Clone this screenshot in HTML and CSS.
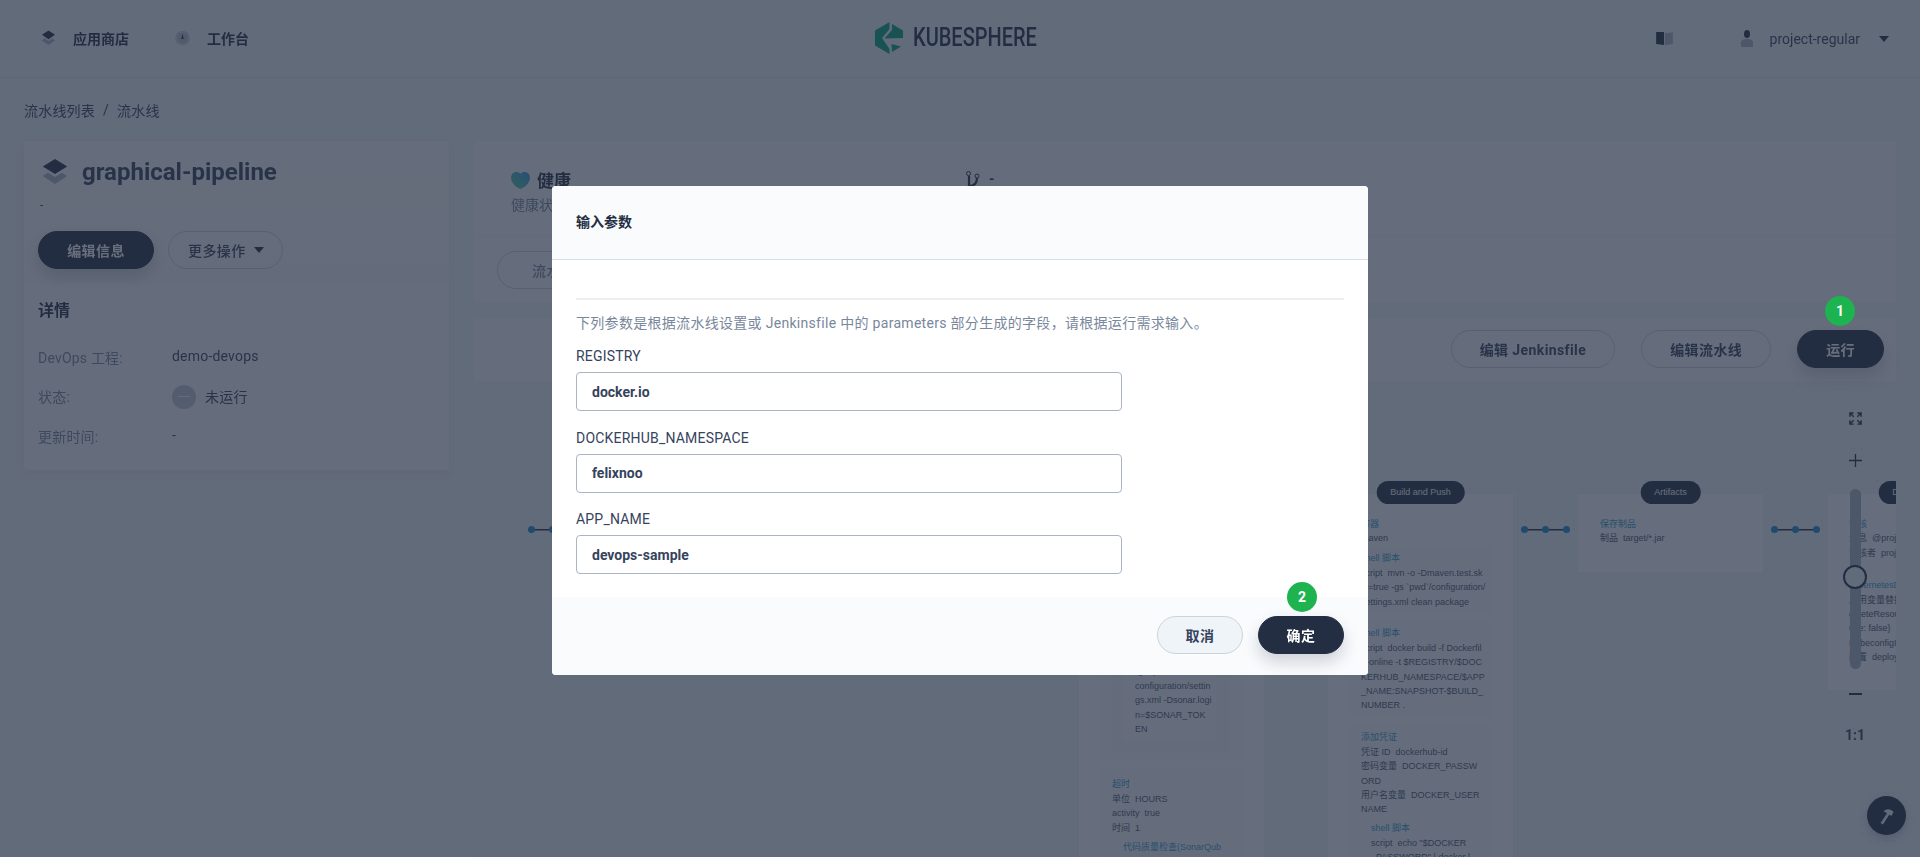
FILE: index.html
```html
<!DOCTYPE html>
<html lang="zh-CN">
<head>
    <meta charset="UTF-8">
    <meta name="viewport" content="width=device-width, initial-scale=1.0">
    <title>graphical-pipeline - KubeSphere</title>
    <link rel="stylesheet" href="styles.css">
</head>
<body>
    <div class="page">
        <header class="topbar">
            <nav class="topnav">
                <a class="topnav-item">
                    <svg class="icon-layers-sm" viewBox="0 0 16 16"><path d="M8 0l7 4.600-7 4.600-7-4.600z" fill="#242e42"/><path d="M1 10.600l3-2 4 2.600 4-2.600 3 2L8 15.400z" fill="#abb4c4"/></svg>
                    <span>应用商店</span>
                </a>
                <a class="topnav-item">
                    <svg class="icon-dash" viewBox="0 0 16 16"><circle cx="8" cy="8" r="7.600" fill="#b6bfcd"/><circle cx="8" cy="8" r="6.200" fill="none" stroke="#e3e8ee" stroke-width=".8"/><path d="M8 3.500l1.300 5.500H6.700z" fill="#242e42"/></svg>
                    <span>工作台</span>
                </a>
            </nav>
            <div class="brand">
                <svg class="brand-mark" viewBox="0 0 28 32">
                    <path d="M14.500 0L0 8.500v15L14.500 32v-5L7 16l7.500-9z" fill="#00a57c"/>
                    <path d="M17 2l11 6.500V16l-18.500.5L17 8z" fill="#00a57c"/>
                    <path d="M16.500 22L26 24.500 17 30z" fill="#00a57c"/>
                </svg>
                <span class="brand-name">KUBESPHERE</span>
            </div>
            <div class="topbar-right">
                <svg class="icon-book" viewBox="0 0 18 14"><path d="M0 0h8.500v14L0 13z" fill="#242e42"/><path d="M9.500 1L18 .5V13l-8.500 1z" fill="#abb4c4"/></svg>
                <div class="user">
                    <svg class="icon-user" viewBox="0 0 12 17"><ellipse cx="6" cy="4" rx="3" ry="4" fill="#242e42"/><path d="M0 17v-4c0-3 2-4 6-4s6 1 6 4v4z" fill="#abb4c4"/></svg>
                    <span>project-regular</span>
                    <i class="caret"></i>
                </div>
            </div>
        </header>

        <div class="crumbs"><span>流水线列表</span><em>/</em><span>流水线</span></div>

        <main class="main">
            <aside class="sidebar">
                <section class="side-head">
                    <div class="side-title">
                        <svg class="icon-layers" viewBox="0 0 16 16"><path d="M8 0l7.500 4.600L8 9.200.5 4.600z" fill="#242e42"/><path d="M.5 10.400l3.200-2L8 11l4.300-2.600 3.200 2L8 15.400z" fill="#abb4c4"/></svg>
                        <h1>graphical-pipeline</h1>
                    </div>
                    <p class="side-desc">-</p>
                    <div class="side-actions">
                        <button class="btn btn-dark">编辑信息</button>
                        <button class="btn btn-more">更多操作<i class="caret"></i></button>
                    </div>
                </section>
                <section class="side-info">
                    <h2>详情</h2>
                    <dl class="info-list">
                        <div class="info-row"><dt>DevOps 工程:</dt><dd>demo-devops</dd></div>
                        <div class="info-row info-status"><dt>状态:</dt><dd><i class="status-dot"></i>未运行</dd></div>
                        <div class="info-row"><dt>更新时间:</dt><dd>-</dd></div>
                    </dl>
                </section>
            </aside>

            <div class="content">
                <section class="summary">
                    <div class="summary-top">
                        <div class="health">
                            <div class="health-title">
                                <svg class="icon-heart" viewBox="0 0 20 18"><defs><linearGradient id="heart" x1="0" y1="1" x2="1" y2="0"><stop offset="0" stop-color="#55d0a0"/><stop offset="1" stop-color="#2f9fe0"/></linearGradient></defs><path d="M10 18C4 15.500 0 11 0 6c0-3.500 2.500-6 5.500-6C7.500 0 9 .8 10 1.800 11 .8 12.500 0 14.500 0 17.500 0 20 2.500 20 6c0 5-4 9.500-10 12z" fill="url(#heart)"/></svg>
                                <strong>健康</strong>
                            </div>
                            <p>健康状态</p>
                        </div>
                        <div class="branch">
                            <svg class="icon-branch" viewBox="0 0 14 18"><circle cx="2.500" cy="2.500" r="2" fill="none" stroke="#242e42"/><circle cx="11" cy="5" r="2" fill="none" stroke="#242e42"/><path d="M3 5v13M3 15c4 0 8-2 8-8" fill="none" stroke="#242e42" stroke-width="2.200"/></svg>
                            <span>-</span>
                        </div>
                    </div>
                    <div class="summary-tabs"><button class="btn">流水线</button></div>
                </section>

                <section class="toolbar">
                    <button class="btn">编辑 Jenkinsfile</button>
                    <button class="btn">编辑流水线</button>
                    <button class="btn btn-dark">运行</button>
                </section>

                <section class="canvas">
                    <div class="link link-first"><i></i><i></i><i></i></div>
                    <div class="pipeline">
                        <article class="stage stage-code">
                            <div class="block">
                                <div class="block-inner">
                                    <div class="block-inner">
                                        <div class="line">script &nbsp;mvn sonar:sonar -o</div>
                                        <div class="line">-gs `pwd`/</div>
                                        <div class="line">configuration/settin</div>
                                        <div class="line">gs.xml -Dsonar.logi</div>
                                        <div class="line">n=$SONAR_TOK</div>
                                        <div class="line">EN</div>
                                    </div>
                                </div>
                            </div>
                            <div class="block block-timeout">
                                <div class="step-name">超时</div>
                                <div class="line">单位 &nbsp;HOURS</div>
                                <div class="line">activity &nbsp;true</div>
                                <div class="line">时间 &nbsp;1</div>
                                <div class="block-nested">
                                    <div class="step-name">代码质量检查(SonarQub</div>
                                </div>
                            </div>
                        </article>

                        <article class="stage stage-build">
                            <span class="chip">Build and Push</span>
                            <div class="step-name">容器</div>
                            <div class="line">maven</div>
                            <div class="box">
                                <div class="step-name">shell 脚本</div>
                                <div class="line">script &nbsp;mvn -o -Dmaven.test.sk</div>
                                <div class="line">ip=true -gs `pwd`/configuration/</div>
                                <div class="line">settings.xml clean package</div>
                            </div>
                            <div class="box">
                                <div class="step-name">shell 脚本</div>
                                <div class="line">script &nbsp;docker build -f Dockerfil</div>
                                <div class="line">e-online -t $REGISTRY/$DOC</div>
                                <div class="line">KERHUB_NAMESPACE/$APP</div>
                                <div class="line">_NAME:SNAPSHOT-$BUILD_</div>
                                <div class="line">NUMBER .</div>
                            </div>
                            <div class="box">
                                <div class="step-name">添加凭证</div>
                                <div class="line">凭证 ID &nbsp;dockerhub-id</div>
                                <div class="line">密码变量 &nbsp;DOCKER_PASSW</div>
                                <div class="line">ORD</div>
                                <div class="line">用户名变量 &nbsp;DOCKER_USER</div>
                                <div class="line">NAME</div>
                                <div class="box box-nested">
                                    <div class="step-name">shell 脚本</div>
                                    <div class="line">script &nbsp;echo "$DOCKER</div>
                                    <div class="line">_PASSWORD" | docker l</div>
                                </div>
                            </div>
                        </article>

                        <div class="link"><i></i><i></i><i></i></div>

                        <article class="stage stage-artifacts">
                            <span class="chip">Artifacts</span>
                            <div class="box box-plain">
                                <div class="step-name">保存制品</div>
                                <div class="line">制品 &nbsp;target/*.jar</div>
                            </div>
                        </article>

                        <div class="link"><i></i><i></i><i></i></div>

                        <article class="stage stage-deploy">
                            <span class="chip">Deploy to Dev</span>
                            <div class="box box-plain">
                                <div class="step-name">审核</div>
                                <div class="line">消息 &nbsp;@project-admin</div>
                                <div class="line">审核者 &nbsp;project-admin</div>
                            </div>
                            <div class="box box-plain">
                                <div class="step-name">kubernetesDeploy</div>
                                <div class="line">启用变量替换 &nbsp;true</div>
                                <div class="line">deleteResource</div>
                                <div class="line">use: false}</div>
                                <div class="line">KubeconfigId</div>
                                <div class="line">配置 &nbsp;deploy/**</div>
                            </div>
                        </article>
                    </div>

                    <div class="zoom-tools">
                        <svg class="icon-expand" viewBox="0 0 14 14"><path d="M1 5V1h4M9 1h4v4M13 9v4H9M5 13H1V9M1 1l4 4M13 1L9 5M13 13L9 9M1 13l4-4" fill="none" stroke="#242e42" stroke-width="1.500"/></svg>
                        <svg class="icon-plus" viewBox="0 0 14 14"><path d="M7 0v14M0 7h14" stroke="#242e42" stroke-width="1.400"/></svg>
                        <div class="zoom-track"><i class="zoom-thumb"></i></div>
                        <i class="zoom-minus"></i>
                        <span class="zoom-ratio">1:1</span>
                    </div>
                </section>
            </div>
        </main>

        <button class="fab">
            <svg viewBox="0 0 16 16"><path d="M4 15l5.500-8.500" stroke="#eef3f8" stroke-width="2.200"/><path d="M5.500 4.500C8 2 11 2 14 5l-2 3.500L8.500 6z" fill="#eef3f8"/></svg>
        </button>
    </div>

    <div class="overlay">
        <span class="badge badge-run">1</span>
        <div class="modal">
            <div class="modal-head">输入参数</div>
            <div class="modal-body">
                <hr class="modal-rule">
                <p class="modal-desc">下列参数是根据流水线设置或 Jenkinsfile 中的 parameters 部分生成的字段，请根据运行需求输入。</p>
                <div class="field">
                    <label>REGISTRY</label>
                    <input class="text-input" type="text" value="docker.io">
                </div>
                <div class="field">
                    <label>DOCKERHUB_NAMESPACE</label>
                    <input class="text-input" type="text" value="felixnoo">
                </div>
                <div class="field">
                    <label>APP_NAME</label>
                    <input class="text-input" type="text" value="devops-sample">
                </div>
            </div>
            <div class="modal-foot">
                <button class="btn btn-cancel">取消</button>
                <div class="confirm-wrap">
                    <span class="badge badge-ok">2</span>
                    <button class="btn btn-dark btn-ok">确定</button>
                </div>
            </div>
        </div>
    </div>
</body>
</html>
```

FILE: styles.css
```css
* {
    box-sizing: border-box;
}
html, body {
    height: 100%;
    margin: 0;
    overflow: hidden;
}
body {
    font-family: Roboto, "Noto Sans CJK SC", sans-serif;
    font-size: 14px;
    color: #242e42;
    background: #eff4f9;
}
/* everything behind the dialog is slightly out of focus */
.page {
    height: 857px;
    display: flex;
    flex-direction: column;
    position: relative;
    filter: blur(.4px);
}
h1, h2, p, dl, dd {
    margin: 0;
}

/* top bar */
.topbar {
    height: 78px;
    flex: none;
    display: flex;
    align-items: center;
    justify-content: space-between;
    padding: 0 31px 0 41px;
    border-bottom: 1px solid #dfe5ec;
    position: relative;
}
.topnav {
    display: flex;
    gap: 46px;
    margin-top: -2px;
}
.topnav-item {
    display: flex;
    align-items: center;
    gap: 17px;
    font-weight: 700;
}
.icon-layers-sm {
    width: 15px;
    height: 16px;
}
.icon-dash {
    width: 15px;
    height: 16px;
}
.brand {
    position: absolute;
    left: 875px;
    top: 22px;
    display: flex;
    align-items: center;
}
.brand-mark {
    width: 28px;
    height: 32px;
}
.brand-name {
    display: inline-block;
    width: 124px;
    margin-left: 10px;
    font-size: 25px;
    font-weight: 500;
    line-height: 32px;
    color: #242e42;
    white-space: nowrap;
    transform: scaleX(.8);
    transform-origin: left center;
}
.topbar-right {
    display: flex;
    align-items: center;
    gap: 68px;
}
.icon-book {
    width: 17px;
    height: 13px;
}
.user {
    display: flex;
    align-items: center;
    color: #36435c;
}
.icon-user {
    width: 12px;
    height: 17px;
    margin-right: 17px;
}
.caret {
    display: inline-block;
    width: 0;
    height: 0;
    border-left: 5.500px solid transparent;
    border-right: 5.500px solid transparent;
    border-top: 6px solid #242e42;
}
.user .caret {
    margin-left: 19px;
}

.crumbs {
    height: 63px;
    flex: none;
    padding: 0 24px;
    display: flex;
    align-items: center;
    gap: 8px;
    color: #36435c;
    letter-spacing: .2px;
}
.crumbs em {
    font-style: normal;
}

/* main area */
.main {
    flex: 1;
    min-height: 0;
    display: flex;
    gap: 25px;
    padding: 0 24px;
}
.sidebar {
    width: 425px;
    height: 329px;
    flex: none;
    background: #f9fbfd;
    border-radius: 4px;
    box-shadow: 0 4px 8px rgba(36,46,66,.06);
}
.side-head {
    height: 142px;
    padding: 18px 14px 0;
    background: linear-gradient(#f9fbfd, #f6f8fb);
}
.side-title {
    display: flex;
    align-items: center;
    gap: 14px;
    height: 26px;
    margin-left: 4px;
}
.icon-layers {
    width: 26px;
    height: 26px;
}
.side-title h1 {
    font-size: 24px;
    font-weight: 700;
    line-height: 26px;
    color: #36435c;
}
.side-desc {
    margin-top: 12px;
    padding-left: 2px;
    font-size: 12px;
    line-height: 16px;
    color: #36435c;
}
.side-actions {
    display: flex;
    gap: 14px;
    margin-top: 18px;
}
.btn {
    height: 38px;
    padding: 0 28px;
    border: 1px solid #ccd3db;
    border-radius: 20px;
    background: transparent;
    font: 700 14px Roboto, "Noto Sans CJK SC", sans-serif;
    letter-spacing: .4px;
    color: #36435c;
    white-space: nowrap;
}
.btn-dark {
    border-color: #242e42;
    background: #242e42;
    color: #ffffff;
    box-shadow: 0 8px 16px rgba(36,46,66,.2);
}
.side-actions .btn-dark {
    width: 116px;
    padding: 0;
}
.btn-more {
    width: 115px;
    padding: 0 0 0 19px;
    display: flex;
    align-items: center;
    font-weight: 500;
}
.btn-more .caret {
    margin-left: 8px;
}
.side-info {
    padding: 17px 14px 0;
}
.side-info h2 {
    font-size: 16px;
    font-weight: 700;
    line-height: 22px;
}
.info-list {
    margin-top: 25px;
}
.info-row {
    display: flex;
    height: 39.500px;
    line-height: 20px;
    letter-spacing: .2px;
}
.info-row dt {
    width: 134px;
    padding-top: 1px;
    color: #79879c;
}
.info-row dd {
    color: #36435c;
    margin-top: -1px;
}
.info-status dd {
    display: flex;
    align-items: center;
    height: 24px;
    margin-top: -2px;
}
.info-status dt {
    padding-top: 0;
}
.status-dot {
    position: relative;
    width: 24px;
    height: 24px;
    margin-right: 9px;
    border-radius: 50%;
    background: #c1c9d4;
}
.status-dot::after {
    content: "";
    position: absolute;
    left: 6px;
    top: 11px;
    width: 12px;
    height: 1.500px;
    background: #eff4f9;
}

.content {
    flex: 1;
    min-width: 0;
    display: flex;
    flex-direction: column;
}
.summary {
    height: 162px;
    flex: none;
    background: #f9fbfd;
    border-radius: 4px;
}
.summary-top {
    height: 96px;
    display: flex;
    padding: 27px 0 0 37px;
    border-bottom: 1px solid #f1f4f8;
}
.health {
    width: 455px;
}
.health-title {
    display: flex;
    align-items: center;
    gap: 7px;
    height: 22px;
}
.icon-heart {
    width: 19px;
    height: 17px;
    margin-top: 3px;
}
.health-title strong {
    font-size: 17px;
}
.health p {
    margin-top: 4px;
    color: #79879c;
}
.branch {
    display: flex;
    align-items: flex-start;
    gap: 9px;
    padding-top: 3px;
    font-weight: 700;
}
.icon-branch {
    width: 14px;
    height: 18px;
}
.summary-tabs {
    padding: 14px 0 0 23px;
}
.summary-tabs .btn {
    padding: 0 34px;
    font-weight: 500;
    color: #79879c;
}
.toolbar {
    height: 62px;
    flex: none;
    margin-top: 16px;
    padding: 11px 12px 0 0;
    display: flex;
    justify-content: flex-end;
    gap: 26px;
    background: #f9fbfd;
}

/* pipeline canvas */
.canvas {
    flex: 1;
    min-height: 0;
    position: relative;
    overflow: hidden;
    background-image: radial-gradient(#e4eaf1 1px, transparent 1px);
    background-size: 8px 8px;
}
.pipeline {
    position: absolute;
    left: 605px;
    top: 113px;
    display: flex;
    align-items: flex-start;
    gap: 64px;
    font: 9px/14.400px "Liberation Sans", "Noto Sans CJK SC", sans-serif;
}
.stage {
    position: relative;
    width: 185px;
    flex: none;
    padding: 23px 21px 10px 33px;
    background: #fbfcfe;
}
.stage-code {
    padding: 141px 21px 10px 21px;
}
.stage-artifacts {
    height: 78px;
    padding-left: 22px;
}
.stage-deploy {
    height: 196px;
    padding-left: 21px;
}
.chip {
    position: absolute;
    left: 50%;
    top: -13px;
    transform: translateX(-50%);
    height: 23px;
    padding: 0 14px;
    border-radius: 12px;
    background: #242e42;
    color: #ffffff;
    line-height: 23px;
    white-space: nowrap;
}
.step-name {
    color: #329dce;
    white-space: nowrap;
}
.line {
    color: #4a5670;
    white-space: nowrap;
}
.box {
    margin: 8px 0 0 -11px;
    padding: 4.500px 11px 5px;
    width: 142px;
    background: #f9fbfd;
}
.stage-build > .line + .box {
    margin-top: 1px;
}
.box-nested {
    width: 118px;
    margin: 0;
    padding-left: 10px;
}
.box-plain {
    width: 143px;
    margin: 0 0 4px 0;
    padding: 0;
    background: transparent;
}
.stage-deploy .box-plain + .box-plain {
    margin-top: 18px;
}
.link {
    position: relative;
    width: 49px;
    flex: none;
    height: 7px;
    display: flex;
    align-items: center;
    justify-content: space-between;
    background: linear-gradient(#242e42, #242e42) center / 100% 1.500px no-repeat;
}
.pipeline .link {
    margin: 32px -56px 0 -56px;
}
.link i {
    width: 7px;
    height: 7px;
    border-radius: 50%;
    background: #1f8fd0;
}
.link-first {
    position: absolute;
    left: 54px;
    top: 145px;
}
.stage-code .block {
    margin: 0 0 0 2px;
    padding: 10px 12px 9px 11px;
    width: 140px;
    background: #f9fbfd;
}
.stage-code .block-inner {
    padding: 0 13px 11px 10px;
    background: #f6f8fb;
}
.stage-code .block-inner .block-inner {
    padding: 5px 5px 5px 12px;
    background: #f9fbfd;
}
.stage-code .block-timeout {
    margin-top: 7px;
    padding: 9px 8px 4px 10px;
}
.block-nested {
    margin-top: 5px;
    padding-left: 11px;
}

/* zoom controls */
.zoom-tools {
    position: absolute;
    right: 21px;
    top: 29px;
    width: 40px;
    display: flex;
    flex-direction: column;
    align-items: center;
}
.icon-expand {
    width: 13px;
    height: 13px;
    margin-top: 2px;
}
.icon-plus {
    width: 13px;
    height: 13px;
    margin-top: 29px;
}
.zoom-track {
    position: relative;
    width: 11px;
    height: 180px;
    margin-top: 22px;
    border-radius: 6px;
    background: #abb4c4;
}
.zoom-thumb {
    position: absolute;
    left: -6.500px;
    top: 76px;
    width: 24px;
    height: 24px;
    border-radius: 50%;
    border: 2px solid #242e42;
    background: #eff4f9;
}
.zoom-minus {
    width: 13px;
    height: 2px;
    margin-top: 24px;
    background: #242e42;
}
.zoom-ratio {
    margin-top: 31px;
    font-weight: 700;
    line-height: 18px;
    color: #36435c;
}
.fab {
    position: absolute;
    right: 14px;
    bottom: 22px;
    width: 39px;
    height: 39px;
    padding: 10px;
    border: 0;
    border-radius: 50%;
    background: #242e42;
    box-shadow: 0 4px 8px rgba(36,46,66,.2);
}
.fab svg {
    display: block;
    width: 19px;
    height: 19px;
}

/* modal */
.overlay {
    position: fixed;
    inset: 0;
    padding-top: 186px;
    display: flex;
    justify-content: center;
    align-items: flex-start;
    background: rgba(35,45,65,.69);
}
.modal {
    width: 816px;
    height: 489px;
    display: flex;
    flex-direction: column;
    border-radius: 4px;
    background: #ffffff;
}
.modal-head {
    height: 74px;
    flex: none;
    padding-left: 24px;
    line-height: 72px;
    font-weight: 700;
    background: #f9fbfd;
    border-radius: 4px 4px 0 0;
    border-bottom: 1px solid #d8dee5;
}
.modal-body {
    flex: 1;
    padding: 38px 24px 0;
}
.modal-rule {
    margin: 0;
    height: 2px;
    border: 0;
    background: #eeeeee;
}
.modal-desc {
    margin-top: 13px;
    line-height: 20px;
    color: #79879c;
    letter-spacing: .3px;
}
.field {
    margin-top: 14px;
    width: 546px;
}
.field + .field {
    margin-top: 17.500px;
}
.field label {
    display: block;
    height: 18px;
    margin-bottom: 7px;
    line-height: 18px;
    color: #36435c;
    letter-spacing: .2px;
}
.text-input {
    display: block;
    width: 100%;
    height: 39px;
    padding: 0 15px;
    border: 1px solid #abb4c4;
    border-radius: 4px;
    outline: none;
    font: 700 14px Roboto, sans-serif;
    color: #36435c;
    background: #ffffff;
}
.modal-foot {
    height: 78px;
    flex: none;
    display: flex;
    justify-content: flex-end;
    gap: 15px;
    padding: 19px 24px 0;
    background: #f9fbfd;
    border-radius: 0 0 4px 4px;
}
.btn-cancel {
    width: 86px;
    padding: 0;
    background: #eff4f9;
}
.btn-ok {
    width: 86px;
    padding: 0;
}
.confirm-wrap {
    position: relative;
}
.badge {
    position: absolute;
    width: 30px;
    height: 30px;
    border-radius: 50%;
    background: #1db34f;
    color: #ffffff;
    font-weight: 700;
    line-height: 30px;
    text-align: center;
}
.badge-run {
    left: 1825px;
    top: 296px;
}
.badge-ok {
    left: 29px;
    top: -34px;
}
```
